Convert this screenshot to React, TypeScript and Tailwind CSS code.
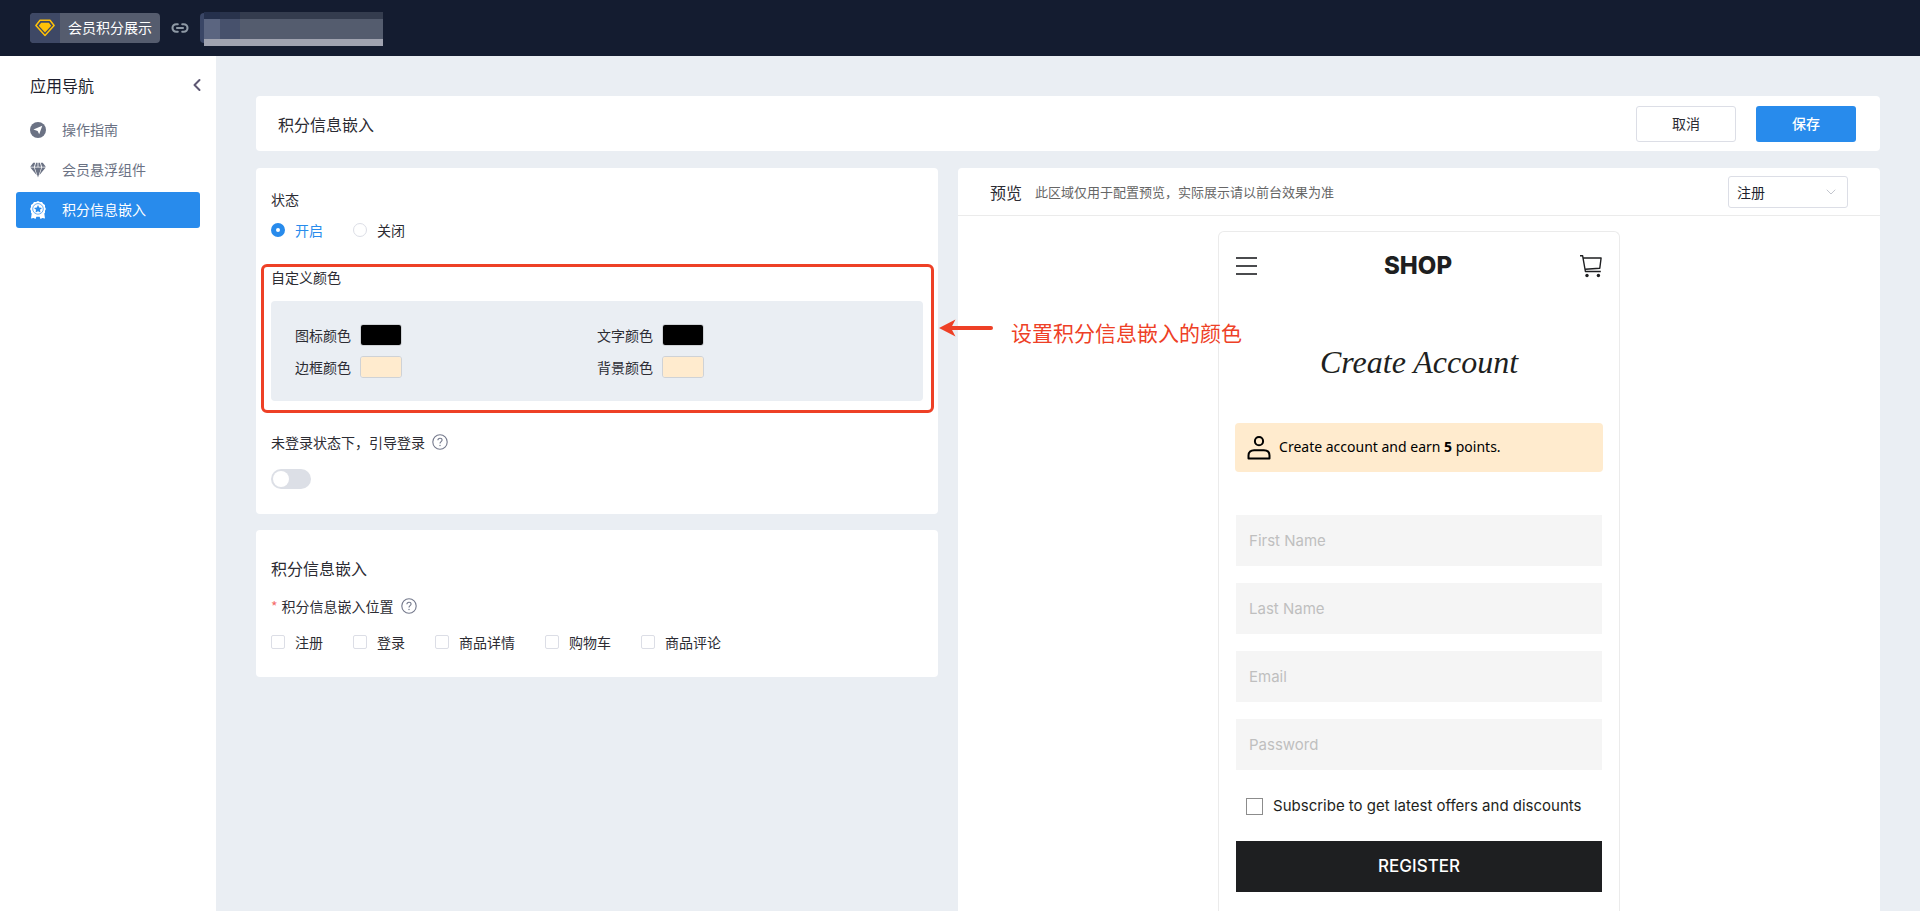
import { useState } from "react";
import { ChevronDown, ChevronLeft, Link2 } from "lucide-react";

const navItems = [
  { label: "操作指南", icon: GuideIcon },
  { label: "会员悬浮组件", icon: GemIcon },
  { label: "积分信息嵌入", icon: MedalIcon },
];

const colorFields = [
  { id: "icon", label: "图标颜色", value: "#000000" },
  { id: "text", label: "文字颜色", value: "#000000" },
  { id: "border", label: "边框颜色", value: "#ffebce" },
  { id: "background", label: "背景颜色", value: "#ffebce" },
];

const positions = ["注册", "登录", "商品详情", "购物车", "商品评论"];

const formFields = [
  { label: "First Name", type: "text" },
  { label: "Last Name", type: "text" },
  { label: "Email", type: "email" },
  { label: "Password", type: "password" },
];

function LogoIcon() {
  return (
    <svg viewBox="0 0 20 18" className="w-5 h-[18px]" aria-hidden="true">
      <path d="M5 1.3h10l4.1 5.2L10 16.5.9 6.5z" fill="none" stroke="#ffc107" strokeWidth="1.5" strokeLinejoin="round" />
      <path d="M6.2 3.8h7.6l2.4 3-6.2 6.7-6.2-6.7z" fill="#ffc107" />
    </svg>
  );
}

function GuideIcon() {
  return (
    <svg viewBox="0 0 16 16" className="w-4 h-4" aria-hidden="true">
      <circle cx="8" cy="8" r="8" fill="currentColor" />
      <path d="M12.3 3.8 9.2 12.2 7.6 8.9 3.4 7.4z" fill="#fff" />
    </svg>
  );
}

function GemIcon() {
  return (
    <svg viewBox="0 0 16 16" className="w-4 h-4" fill="currentColor" aria-hidden="true">
      <path d="M3.2.8h2L4 4.8H.2zM6.1.8h1.5v4H4.9zM8.4.8h1.5l1.2 4H8.4zM10.8.8h2l3 4H12zM.3 5.5H4l2.7 7.8zM4.7 5.5h6.6L8 15.6zM12 5.5h3.7l-6.4 7.8z" />
    </svg>
  );
}

function MedalIcon() {
  return (
    <svg viewBox="0 0 16 18" className="w-4 h-[18px]" aria-hidden="true">
      <path
        d="M8 0l1.9.9 2.1.1 1.2 1.7 1.8 1.2v2.1l.9 1.9-.9 1.9v2l-.7.8.7 4.8-2.6-.5-1.9 1-.9-2.1H6.4l-.9 2.1-1.9-1-2.6.5.7-4.8-.7-.8v-2L.1 7.9 1 6V3.9l1.8-1.2L4 1l2.1-.1z"
        fill="#fff"
      />
      <circle cx="8" cy="7.9" r="5.3" fill="none" stroke="#288bec" strokeWidth=".7" />
      <path d="M8 4l1.2 2.5 2.8.4-2 1.9.5 2.8L8 10.3l-2.5 1.3.5-2.8-2-1.9 2.8-.4z" fill="#288bec" />
    </svg>
  );
}

function HelpIcon() {
  return (
    <svg viewBox="0 0 16 16" className="w-4 h-4 text-[#74798c]" fill="none" stroke="currentColor" aria-hidden="true">
      <circle cx="8" cy="8" r="7.2" strokeWidth="1.1" />
      <path d="M5.9 6.3c0-1.3.9-2.1 2.1-2.1s2.1.8 2.1 1.9c0 1.5-2.1 1.6-2.1 3.3" strokeWidth="1.1" />
      <circle cx="8" cy="11.5" r=".7" fill="currentColor" stroke="none" />
    </svg>
  );
}

function CartIcon() {
  return (
    <svg viewBox="0 0 24 24" className="w-6 h-6" fill="none" stroke="#1e1f21" strokeWidth="1.4" aria-hidden="true">
      <path d="M1 1.7h2.6l2.8 15.8h15.4M4.2 4h17.9l-1.3 10.2-14.6 1.1" strokeLinejoin="round" />
      <circle cx="8" cy="21.5" r="1.7" fill="#1e1f21" stroke="none" />
      <circle cx="19.4" cy="21.5" r="1.7" fill="#1e1f21" stroke="none" />
    </svg>
  );
}

function UserIcon() {
  return (
    <svg viewBox="0 0 24 24" className="w-6 h-6" fill="none" stroke="#000" strokeWidth="2" aria-hidden="true">
      <circle cx="12" cy="5.2" r="4.1" />
      <path d="M1.5 22.6v-3.1c0-3.4 2.4-5.3 5.6-5.3h9.8c3.2 0 5.6 1.9 5.6 5.3v3.1z" strokeLinejoin="round" />
    </svg>
  );
}

function TopBar() {
  return (
    <header className="h-14 shrink-0 bg-[#141c30] flex items-center px-[30px]">
      <div className="flex h-[30px] rounded overflow-hidden bg-[#555c6e]">
        <span className="w-[30px] bg-[#3e4865] flex items-center justify-center">
          <LogoIcon />
        </span>
        <span className="px-2 text-sm leading-7 text-white">会员积分展示</span>
      </div>
      <Link2 className="w-[18px] h-[18px] mx-[11px] text-[#8e99a5]" strokeWidth={2.8} />
      <span className="w-1 h-[30px] rounded-l bg-[#3a4666]" />
      <div className="flex flex-col w-[179px] pt-[2px]">
        <div className="h-[7px] flex">
          <span className="w-4 bg-[#25304c]" />
          <span className="w-5 bg-[#29334c]" />
          <span className="flex-1 bg-[#343c4e]" />
        </div>
        <div className="h-5 flex">
          <span className="w-4 bg-[#5b6580]" />
          <span className="w-5 bg-[#47516c]" />
          <span className="flex-1 bg-[#545c6e]" />
        </div>
        <div className="h-[7px] bg-[#a0a3b0]" />
      </div>
    </header>
  );
}

function Sidebar() {
  return (
    <aside className="w-[216px] shrink-0 bg-white px-4 pt-[14px]">
      <div className="flex items-center justify-between h-[30px] pl-[14px] mb-3">
        <h2 className="text-base text-[#1e1f2e]">应用导航</h2>
        <button type="button" aria-label="收起" className="-mr-[7px]">
          <ChevronLeft className="w-5 h-5 text-[#5e5873]" strokeWidth={2.4} />
        </button>
      </div>
      <nav className="flex flex-col gap-1">
        {navItems.map(({ label, icon: Icon }, i) => (
          <a
            key={label}
            href="#"
            className={
              i === 2
                ? "flex items-center gap-4 h-9 pl-[14px] rounded-[3px] text-sm bg-[#288bec] text-white"
                : "flex items-center gap-4 h-9 pl-[14px] rounded-[3px] text-sm text-[#6b7284]"
            }
          >
            <Icon />
            <span className="pb-[2px]">{label}</span>
          </a>
        ))}
      </nav>
    </aside>
  );
}

function Annotation() {
  return (
    <>
      <div className="absolute -top-1 -bottom-3 -left-[10px] -right-[11px] border-[3px] border-[#ee4026] rounded-md pointer-events-none" />
      <div className="absolute z-10 top-[50px] left-full ml-4 flex items-start gap-[18px] pointer-events-none">
        <svg viewBox="0 0 54 20" className="w-[54px] h-5 shrink-0" aria-hidden="true">
          <path d="M12 10h40" stroke="#ee4026" strokeWidth="4" strokeLinecap="round" />
          <path d="M0 10 16.5 1.5 12 10l4.5 8.5z" fill="#ee4026" />
        </svg>
        <span className="text-[21px] leading-7 whitespace-nowrap text-[#ee4026]">设置积分信息嵌入的颜色</span>
      </div>
    </>
  );
}

function StatusCard() {
  const [status, setStatus] = useState("开启");
  const [guide, setGuide] = useState(false);

  return (
    <section className="bg-white rounded px-[15px] pt-[21px] pb-[25px] text-sm leading-5 text-[#2c2c33]">
      <h3>状态</h3>
      <div className="flex gap-[30px] mt-[11px]">
        {["开启", "关闭"].map((s) => (
          <label key={s} className="flex items-center gap-[10px]">
            <input
              type="radio"
              name="status"
              checked={status === s}
              onChange={() => setStatus(s)}
              className="peer appearance-none w-[14px] h-[14px] rounded-full bg-white border border-[#dcdee6] checked:border-[5px] checked:border-[#288bec]"
            />
            <span className="peer-checked:text-[#288bec]">{s}</span>
          </label>
        ))}
      </div>

      {/* Custom colors */}
      <div className="relative mt-7">
        <h3 className="leading-[18px]">自定义颜色</h3>
        <div className="mt-[15px] grid grid-cols-2 gap-y-[10px] px-6 py-[23px] rounded bg-[#eaeef3]">
          {colorFields.map((f) => (
            <label key={f.id} className="flex items-center gap-[9px] h-[22px]">
              {f.label}
              <input
                type="color"
                defaultValue={f.value}
                className="appearance-none w-[42px] h-[22px] p-0 rounded-[3px] overflow-hidden border border-[#cfd2d6] [&::-webkit-color-swatch-wrapper]:p-0 [&::-webkit-color-swatch]:border-0"
              />
            </label>
          ))}
        </div>
        <Annotation />
      </div>

      <div className="flex items-center gap-[7px] mt-[31px]">
        <h3 id="guide-label">未登录状态下，引导登录</h3>
        <HelpIcon />
      </div>
      <button
        type="button"
        role="switch"
        aria-checked={guide}
        aria-labelledby="guide-label"
        onClick={() => setGuide(!guide)}
        className="block mt-[17px] w-10 h-5 p-[2px] rounded-full bg-[#dcdfe6] aria-checked:bg-[#288bec] aria-checked:pl-[22px]"
      >
        <span className="block w-4 h-4 rounded-full bg-white" />
      </button>
    </section>
  );
}

function PositionCard() {
  return (
    <section className="bg-white rounded px-[15px] pt-[26px] pb-[25px] text-sm leading-5 text-[#2c2c33]">
      <h2 className="text-base leading-6">积分信息嵌入</h2>
      <div className="flex items-center gap-[7px] mt-4">
        <h3>
          <span className="text-[#f56c6c] mr-1">*</span>
          积分信息嵌入位置
        </h3>
        <HelpIcon />
      </div>
      <div className="flex flex-wrap gap-[30px] mt-4">
        {positions.map((p) => (
          <label key={p} className="flex items-center gap-[10px]">
            <input
              type="checkbox"
              className="appearance-none w-[14px] h-[14px] rounded-[2px] bg-white border border-[#dcdee6] checked:bg-[#288bec]"
            />
            {p}
          </label>
        ))}
      </div>
    </section>
  );
}

function PhonePreview() {
  return (
    <div className="flex-1 w-[402px] mx-auto mt-[15px] px-4 pt-5 border border-b-0 border-[#ebebeb] rounded-t-md font-[Inter,sans-serif] text-[#1e1f21]">
      <div className="flex items-center justify-between h-7 pl-px">
        <button type="button" aria-label="Menu" className="w-[21px] flex flex-col gap-[6px]">
          <span className="h-[2px] bg-[#4a4b4d]" />
          <span className="h-[2px] bg-[#4a4b4d]" />
          <span className="h-[2px] bg-[#4a4b4d]" />
        </button>
        <strong className="text-2xl leading-7 font-extrabold">SHOP</strong>
        <button type="button" aria-label="Cart">
          <CartIcon />
        </button>
      </div>

      <h2 className="mt-[62px] text-center text-[32px] leading-10 italic font-['Liberation_Serif',serif]">
        Create Account
      </h2>

      <div className="mt-[41px] h-[49px] flex items-center gap-2 px-3 rounded bg-[#ffebce] text-black">
        <UserIcon />
        <p className="pb-[2px] text-sm leading-5 font-['Noto_Sans',sans-serif]">
          Create account and earn <b>5</b> points.
        </p>
      </div>

      <form className="mt-[43px] px-px" onSubmit={(e) => e.preventDefault()}>
        <div className="flex flex-col gap-[17px]">
          {formFields.map((f) => (
            <input
              key={f.label}
              type={f.type}
              aria-label={f.label}
              placeholder={f.label}
              className="w-full h-[51px] px-[13px] bg-[#f5f5f5] text-[15px] placeholder:text-[#bfbfbf]"
            />
          ))}
        </div>
        <label className="flex items-center gap-[10px] mt-[26px] pl-[10px] text-[15px] leading-5 whitespace-nowrap">
          <input type="checkbox" className="appearance-none shrink-0 w-[17px] h-[17px] border border-[#8c8c8c] bg-white" />
          Subscribe to get latest offers and discounts
        </label>
        <button type="submit" className="w-full h-[51px] mt-[25px] bg-[#1e1f21] text-white text-[17px] font-medium">
          REGISTER
        </button>
      </form>
    </div>
  );
}

const App = () => {
  return (
    <div className="h-screen flex flex-col overflow-hidden font-['Noto_Sans_CJK_SC',sans-serif]">
      <TopBar />
      <div className="flex flex-1 min-h-0">
        <Sidebar />
        <main className="flex-1 flex flex-col px-10 pt-10 bg-[#eaeef3]">
          <div className="flex items-center h-[55px] shrink-0 pl-[22px] pr-6 rounded bg-white">
            <h1 className="flex-1 text-base text-[#2c2c33]">积分信息嵌入</h1>
            <button type="button" className="w-[100px] h-9 pb-[2px] rounded-[3px] border border-[#dcdee6] text-sm text-[#2c2c33]">
              取消
            </button>
            <button type="button" className="w-[100px] h-9 pb-[2px] ml-5 rounded-[3px] bg-[#288bec] text-sm font-medium text-white">
              保存
            </button>
          </div>

          <div className="flex flex-1 gap-5 mt-[17px]">
            <div className="w-[42%] shrink-0 flex flex-col gap-4">
              <StatusCard />
              <PositionCard />
            </div>

            {/* Preview */}
            <section className="flex-1 flex flex-col rounded-t bg-white">
              <div className="flex items-center h-12 pl-8 pr-8 border-b border-[#ebebeb]">
                <h2 className="text-base text-[#2c2c33]">预览</h2>
                <p className="flex-1 ml-[13px] text-[13px] text-[#666]">此区域仅用于配置预览，实际展示请以前台效果为准</p>
                <div className="relative">
                  <select
                    aria-label="预览页面"
                    className="appearance-none block w-[120px] h-8 pl-2 rounded-[3px] border border-[#dcdee6] bg-white text-sm text-[#1e1f2e]"
                  >
                    {positions.map((p) => (
                      <option key={p}>{p}</option>
                    ))}
                  </select>
                  <ChevronDown className="absolute right-[9px] top-2 w-4 h-4 text-[#c3c6ce] pointer-events-none" strokeWidth={1.5} />
                </div>
              </div>
              <PhonePreview />
            </section>
          </div>
        </main>
      </div>
    </div>
  );
};

export default App;
